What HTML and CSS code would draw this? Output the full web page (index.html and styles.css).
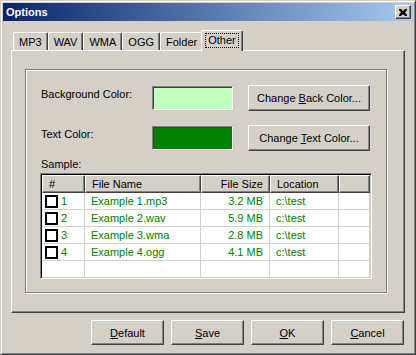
FILE: index.html
```html
<!DOCTYPE html>
<html lang="en">
<head>
  <meta charset="UTF-8">
  <title>Options</title>
  <link rel="stylesheet" href="styles.css">
</head>
<body>
<div class="window">
  <div class="titlebar">
    <span class="title">Options</span>
    <span class="close">
      <svg width="8" height="7" viewBox="0 0 8 7"><path d="M0 0h2l2 2 2-2h2v1L6 3.5 8 6v1H6L4 5 2 7H0V6l2-2.5L0 1z" fill="#000"/></svg>
    </span>
  </div>
  <div class="body">
    <ul class="tabs">
      <li class="tab">MP3</li>
      <li class="tab">WAV</li>
      <li class="tab">WMA</li>
      <li class="tab">OGG</li>
      <li class="tab">Folder</li>
      <li class="tab active"><span class="focus">Other</span></li>
    </ul>
    <div class="panel">
      <div class="group">
        <div class="row">
          <span class="label">Background Color:</span>
          <span class="swatch back"></span>
          <button class="btn wide">Change <u>B</u>ack Color...</button>
        </div>
        <div class="row">
          <span class="label">Text Color:</span>
          <span class="swatch fore"></span>
          <button class="btn wide">Change <u>T</u>ext Color...</button>
        </div>
        <div class="sample-label">Sample:</div>
        <div class="list">
          <div class="head">
            <span class="col c-num">#</span>
            <span class="col c-name">File Name</span>
            <span class="col c-size">File Size</span>
            <span class="col c-loc">Location</span>
            <span class="col c-rest"></span>
          </div>
          <div class="item">
            <span class="cell c-num"><i class="check"></i>1</span>
            <span class="cell c-name">Example 1.mp3</span>
            <span class="cell c-size">3.2 MB</span>
            <span class="cell c-loc">c:\test</span>
            <span class="cell c-rest"></span>
          </div>
          <div class="item">
            <span class="cell c-num"><i class="check"></i>2</span>
            <span class="cell c-name">Example 2.wav</span>
            <span class="cell c-size">5.9 MB</span>
            <span class="cell c-loc">c:\test</span>
            <span class="cell c-rest"></span>
          </div>
          <div class="item">
            <span class="cell c-num"><i class="check"></i>3</span>
            <span class="cell c-name">Example 3.wma</span>
            <span class="cell c-size">2.8 MB</span>
            <span class="cell c-loc">c:\test</span>
            <span class="cell c-rest"></span>
          </div>
          <div class="item">
            <span class="cell c-num"><i class="check"></i>4</span>
            <span class="cell c-name">Example 4.ogg</span>
            <span class="cell c-size">4.1 MB</span>
            <span class="cell c-loc">c:\test</span>
            <span class="cell c-rest"></span>
          </div>
          <div class="item empty">
            <span class="cell c-num"></span>
            <span class="cell c-name"></span>
            <span class="cell c-size"></span>
            <span class="cell c-loc"></span>
            <span class="cell c-rest"></span>
          </div>
        </div>
      </div>
    </div>
    <div class="footer">
      <button class="btn"><u>D</u>efault</button>
      <button class="btn"><u>S</u>ave</button>
      <button class="btn"><u>O</u>K</button>
      <button class="btn"><u>C</u>ancel</button>
    </div>
  </div>
</div>
</body>
</html>
```
FILE: styles.css
```css
*{
  margin: 0;
  padding: 0;
  box-sizing: border-box;
}
body{
  font-family: "Liberation Sans", Arial, sans-serif;
  font-size: 11px;
  color: #000;
  background: #d4d0c8;
}
.window{
  width: 416px;
  height: 355px;
  background: #d4d0c8;
  border: 1px solid;
  border-color: #d4d0c8 #404040 #404040 #d4d0c8;
  box-shadow: inset 1px 1px #fff, inset -1px -1px #808080;
  padding: 2px;
  display: flex;
  flex-direction: column;
}
.titlebar{
  height: 18px;
  display: flex;
  align-items: center;
  justify-content: space-between;
  padding: 0 2px;
  background: linear-gradient(to right, #0a246a, #a6caf0);
}
.title{
  color: #fff;
  font-weight: bold;
  font-size: 11px;
  padding-left: 1px;
}
.close{
  width: 16px;
  height: 14px;
  background: #d4d0c8;
  border: 1px solid;
  border-color: #fff #404040 #404040 #fff;
  box-shadow: inset -1px -1px #808080;
  display: flex;
  align-items: center;
  justify-content: center;
}
.body{
  flex: 1;
  display: flex;
  flex-direction: column;
  padding: 9px 8px 0;
}
.tabs{
  list-style: none;
  display: flex;
  height: 20px;
  padding-left: 2px;
  align-items: flex-end;
  position: relative;
  z-index: 2;
}
.tab{
  height: 18px;
  padding: 0 5px;
  display: flex;
  align-items: center;
  border-top: 1px solid #fff;
  border-left: 1px solid #fff;
  border-right: 1px solid #404040;
  box-shadow: inset -1px 0 #808080;
  border-radius: 2px 2px 0 0;
}
.tab.active{
  height: 21px;
  margin: 0 -2px -1px;
  padding: 0 3px 2px;
  background: #d4d0c8;
}
.focus{
  border: 1px dotted #000;
  padding: 0 2px;
  line-height: 13px;
}
.panel{
  height: 263px;
  border: 1px solid;
  border-color: #fff #404040 #404040 #fff;
  box-shadow: inset -1px -1px #808080;
  padding: 18px 17px 19px 13px;
  display: flex;
}
.group{
  flex: 1;
  border: 1px solid #808080;
  box-shadow: inset 1px 1px #fff, 1px 1px #fff;
  padding: 15px 14px 13px 15px;
  display: flex;
  flex-direction: column;
}
.row{
  display: flex;
  align-items: center;
  height: 25px;
  margin-bottom: 15px;
}
.label{
  width: 111px;
  padding-bottom: 8px;
}
.swatch{
  width: 81px;
  height: 24px;
  margin-right: 15px;
  border: 1px solid;
  border-color: #808080 #fff #fff #808080;
  box-shadow: inset 1px 1px #404040;
}
.back{ background: #c0ffc0; }
.fore{ background: #008000; }
.btn{
  font-family: inherit;
  font-size: 11px;
  color: #000;
  background: #d4d0c8;
  height: 25px;
  width: 73px;
  border: 1px solid;
  border-color: #fff #404040 #404040 #fff;
  box-shadow: inset -1px -1px #808080;
}
.btn.wide{
  width: 122px;
  height: 26px;
}
.sample-label{
  margin-top: -7px;
  height: 15px;
}
.list{
  flex: 1;
  margin-left: -1px;
  background: #fff;
  border: 1px solid;
  border-color: #808080 #fff #fff #808080;
  box-shadow: inset 1px 1px #000, inset -1px -1px #d4d0c8;
  padding: 1px;
  overflow: hidden;
}
.head, .item{
  display: flex;
}
.col{
  height: 18px;
  background: #d4d0c8;
  border: 1px solid;
  border-color: #fff #404040 #404040 #fff;
  box-shadow: inset -1px -1px #808080;
  padding: 0 6px;
  line-height: 16px;
}
.cell{
  height: 17px;
  border-right: 1px solid #d4d0c8;
  border-bottom: 1px solid #d4d0c8;
  color: #008000;
  padding: 0 6px;
  line-height: 16px;
  display: flex;
  align-items: center;
}
.c-num{ width: 43px; }
.c-name{ width: 116px; }
.c-size{ width: 69px; justify-content: flex-end; text-align: right; }
.c-loc{ width: 69px; }
.c-rest{ flex: 1; }
.cell.c-num{ padding-left: 3px; }
.check{
  width: 13px;
  height: 13px;
  border: 2px solid #000;
  background: #fff;
  margin-right: 3px;
}
.footer{
  display: flex;
  justify-content: flex-end;
  gap: 7px;
  padding: 7px 1px 0 0;
}
```
